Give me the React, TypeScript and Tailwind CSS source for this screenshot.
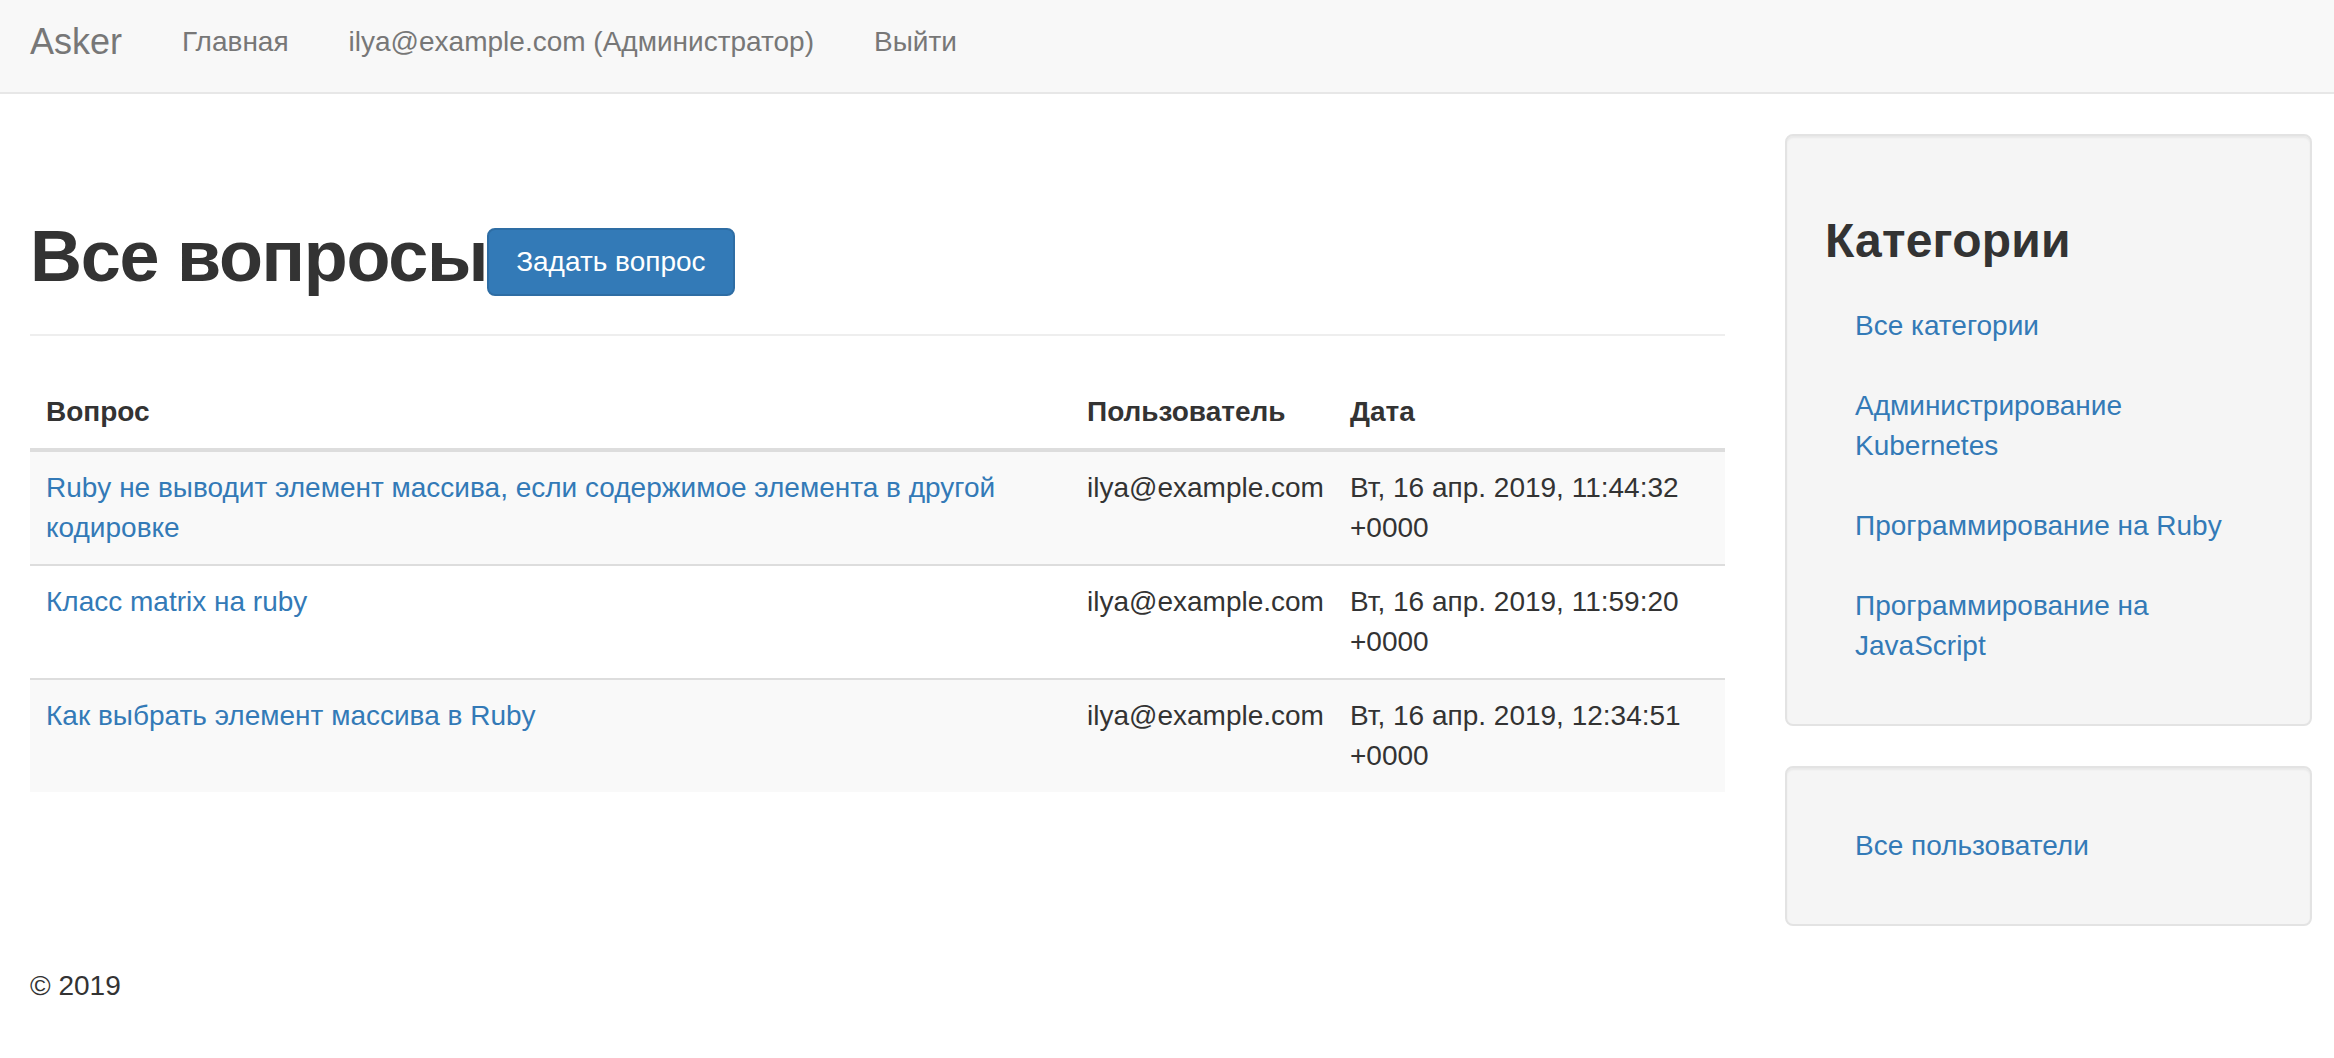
export default function App() {
  const questions = [
    {
      title: "Ruby не выводит элемент массива, если содержимое элемента в другой кодировке",
      user: "ilya@example.com",
      date: "Вт, 16 апр. 2019, 11:44:32 +0000",
    },
    {
      title: "Класс matrix на ruby",
      user: "ilya@example.com",
      date: "Вт, 16 апр. 2019, 11:59:20 +0000",
    },
    {
      title: "Как выбрать элемент массива в Ruby",
      user: "ilya@example.com",
      date: "Вт, 16 апр. 2019, 12:34:51 +0000",
    },
  ];

  const categories = [
    "Все категории",
    "Администрирование Kubernetes",
    "Программирование на Ruby",
    "Программирование на JavaScript",
  ];

  return (
    <div className="min-h-screen bg-white font-['Liberation_Sans',Arial,sans-serif] text-[28px] leading-[40px] text-[#333]">
      {/* NAVBAR */}
      <nav className="h-[94px] bg-[#f8f8f8] border-b-2 border-[#e7e7e7]">
        <div className="flex items-center h-[92px] pb-[8px] text-[#777]">
          <a className="px-[30px] text-[36px] leading-[40px]">Asker</a>
          <a className="px-[30px]">Главная</a>
          <a className="px-[30px]">ilya@example.com (Администратор)</a>
          <a className="px-[30px]">Выйти</a>
        </div>
      </nav>

      <div className="px-[30px] pt-[40px]">
        <div className="flex items-start">
          {/* MAIN COLUMN */}
          <div className="w-[1695px] shrink-0">
            <div className="mt-[83px] pb-[38px] border-b-2 border-[#eee]">
              <h1 className="flex items-center h-[79px] text-[72px] leading-[79px] font-bold tracking-[-1.3px]">
                <span>Все вопросы</span>
                <a className="mt-[11px] inline-block rounded-[8px] border-2 border-[#2e6da4] bg-[#337ab7] px-[27px] py-[12px] text-[28px] leading-[40px] font-normal tracking-normal text-white">
                  Задать вопрос
                </a>
              </h1>
            </div>

            <table className="mt-[40px] mb-[40px] w-full table-fixed border-collapse">
              <thead>
                <tr>
                  <th className="w-[1041px] p-[16px] text-left font-bold border-b-4 border-[#ddd]">Вопрос</th>
                  <th className="w-[263px] p-[16px] text-left font-bold border-b-4 border-[#ddd] whitespace-nowrap">Пользователь</th>
                  <th className="p-[16px] text-left font-bold border-b-4 border-[#ddd]">Дата</th>
                </tr>
              </thead>
              <tbody>
                {questions.map((q, i) => (
                  <tr key={i} className={i % 2 === 0 ? "bg-[#f9f9f9]" : "bg-white"}>
                    <td className={`p-[16px] align-top ${i > 0 ? "border-t-2 border-[#ddd]" : ""}`}>
                      <a className="text-[#337ab7]">{q.title}</a>
                    </td>
                    <td className={`p-[16px] align-top whitespace-nowrap ${i > 0 ? "border-t-2 border-[#ddd]" : ""}`}>{q.user}</td>
                    <td className={`p-[16px] align-top ${i > 0 ? "border-t-2 border-[#ddd]" : ""}`}>{q.date}</td>
                  </tr>
                ))}
              </tbody>
            </table>
          </div>

          {/* SIDEBAR */}
          <div className="ml-[60px] w-[527px] shrink-0">
            <div className="mb-[40px] rounded-[8px] border-2 border-[#e3e3e3] bg-[#f5f5f5] p-[38px] shadow-[inset_0_2px_2px_rgba(0,0,0,0.05)]">
              <h3 className="mt-[40px] mb-[19px] text-[48px] leading-[53px] font-bold tracking-[0.2px]">Категории</h3>
              <ul>
                {categories.map((c) => (
                  <li key={c} className="px-[30px] py-[20px]">
                    <a className="text-[#337ab7]">{c}</a>
                  </li>
                ))}
              </ul>
            </div>

            <div className="mb-[40px] rounded-[8px] border-2 border-[#e3e3e3] bg-[#f5f5f5] p-[38px] shadow-[inset_0_2px_2px_rgba(0,0,0,0.05)]">
              <ul>
                <li className="px-[30px] py-[20px]">
                  <a className="text-[#337ab7]">Все пользователи</a>
                </li>
              </ul>
            </div>
          </div>
        </div>

        {/* FOOTER */}
        <footer>
          <p>© 2019</p>
        </footer>
      </div>
    </div>
  );
}
